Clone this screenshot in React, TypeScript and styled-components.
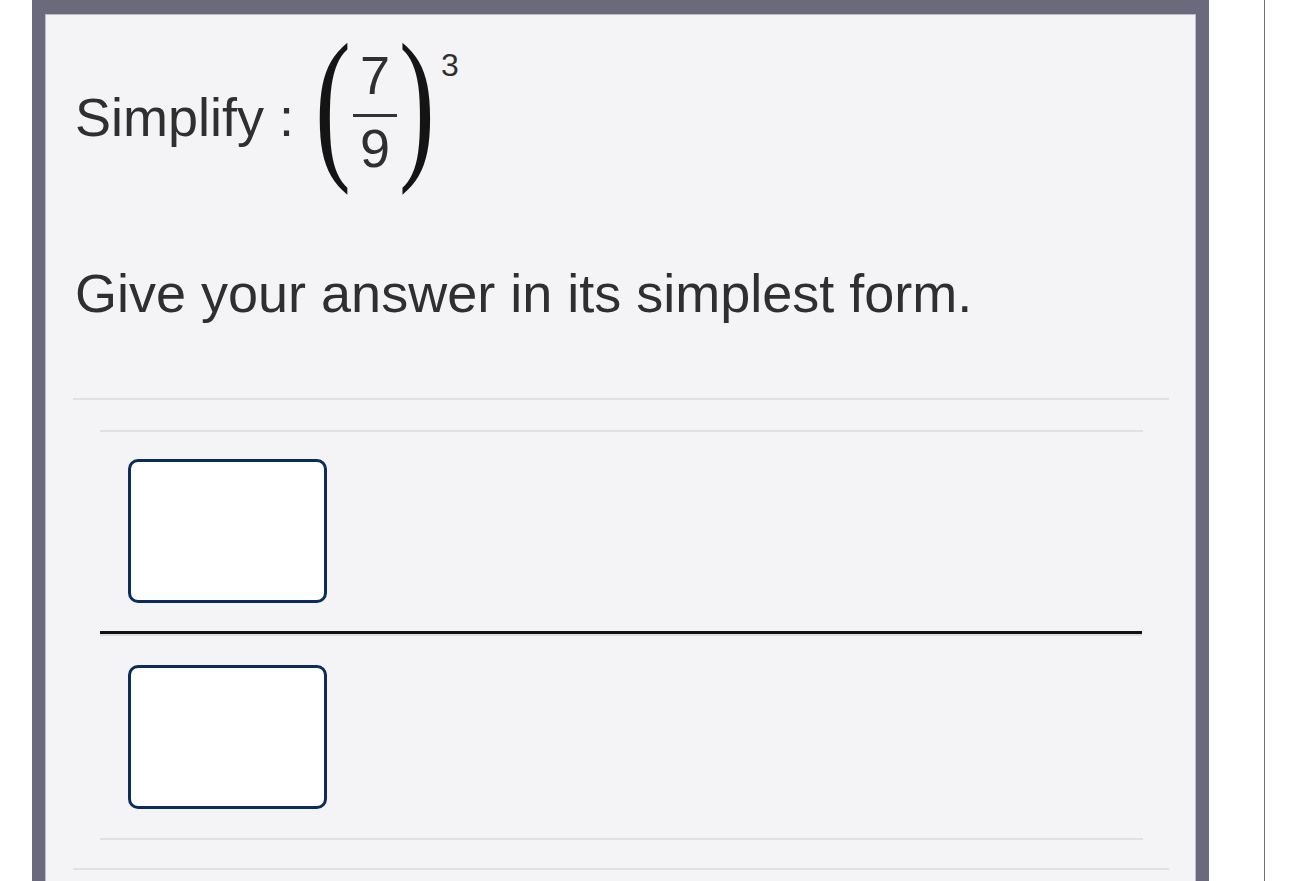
import React from "react";
import styled, { createGlobalStyle } from "styled-components";

const Global = createGlobalStyle`
  html, body { margin: 0; padding: 0; background: #ffffff; }
  body { font-family: "Liberation Sans", Arial, sans-serif; }
`;

const Page = styled.div`
  display: flex;
  height: 881px;
  overflow: hidden;
  padding-left: 32px;
  box-sizing: border-box;
`;

const Frame = styled.main`
  width: 1177px;
  flex: none;
  box-sizing: border-box;
  border: 13px solid #6b6a7c;
  border-top-width: 14px;
  border-bottom: none;
  background: #f4f4f7;
  box-shadow: inset 1px 1px 0 #bcbcc6, inset -1px 0 0 #bcbcc6;
  display: flex;
  flex-direction: column;
`;

const SideRule = styled.div`
  margin-left: 55px;
  width: 1px;
  flex: none;
  background: #707070;
`;

const Prompt = styled.div`
  display: flex;
  align-items: center;
  margin: 28px 0 0 30px;
  color: #2f2f2f;
  font-size: 54px;
  line-height: 62px;
`;

const Label = styled.span`
  white-space: pre;
`;

const MathExpr = styled.span`
  display: inline-flex;
  align-items: center;
  margin-left: 22px;
`;

const Paren = styled.span`
  width: 34px;
  height: 150px;
  display: flex;
  align-items: center;
  justify-content: center;
  font-family: "Liberation Serif", "Times New Roman", serif;
  font-size: 96px;
  line-height: 96px;
  color: #141414;
`;

const ParenGlyph = styled.span`
  display: block;
  transform: scale(1.12, 1.75) translateY(-8px);
`;

const Frac = styled.span`
  display: inline-flex;
  flex-direction: column;
  align-items: center;
  padding: 0 3px;
  margin-bottom: 11px;
`;

const Num = styled.span`
  line-height: 54px;
  margin-bottom: 12px;
`;

const Den = styled.span`
  line-height: 54px;
  margin-top: 4px;
`;

const FracBar = styled.span`
  width: 44px;
  height: 3px;
  background: #333333;
`;

const Sup = styled.span`
  align-self: flex-start;
  font-size: 32px;
  line-height: 32px;
  margin: 7px 0 0 7px;
`;

const Instruction = styled.p`
  margin: 70px 0 0 30px;
  color: #2f2f2f;
  font-size: 54px;
  line-height: 62px;
`;

const Rule = styled.div<{ $inset: number; $top: number }>`
  height: 2px;
  background: #dfdfe4;
  margin: ${(p) => p.$top}px ${(p) => p.$inset - 1}px 0 ${(p) => p.$inset}px;
`;

const AnswerArea = styled.div`
  display: flex;
  flex-direction: column;
  padding: 0 54px 0 55px;
`;

const InputBox = styled.div<{ $top: number }>`
  width: 199px;
  height: 144px;
  box-sizing: border-box;
  margin: ${(p) => p.$top}px 0 0 28px;
  border: 3px solid #0b2d5d;
  border-radius: 10px;
  background: #ffffff;
`;

const AnswerBar = styled.div`
  height: 3px;
  margin-top: 28px;
  background: #111111;
  box-shadow: 0 2px 0 #dcdce1;
`;

export default function App() {
  return (
    <>
      <Global />
      <Page>
        <Frame>
          <Prompt>
            <Label>Simplify :</Label>
            <MathExpr>
              <Paren>
                <ParenGlyph>(</ParenGlyph>
              </Paren>
              <Frac>
                <Num>7</Num>
                <FracBar />
                <Den>9</Den>
              </Frac>
              <Paren>
                <ParenGlyph>)</ParenGlyph>
              </Paren>
              <Sup>3</Sup>
            </MathExpr>
          </Prompt>
          <Instruction>Give your answer in its simplest form.</Instruction>
          <Rule $inset={28} $top={74} />
          <AnswerArea>
            <Rule $inset={0} $top={30} />
            <InputBox $top={27} />
            <AnswerBar />
            <InputBox $top={31} />
            <Rule $inset={0} $top={29} />
          </AnswerArea>
          <Rule $inset={28} $top={28} />
        </Frame>
        <SideRule />
      </Page>
    </>
  );
}
